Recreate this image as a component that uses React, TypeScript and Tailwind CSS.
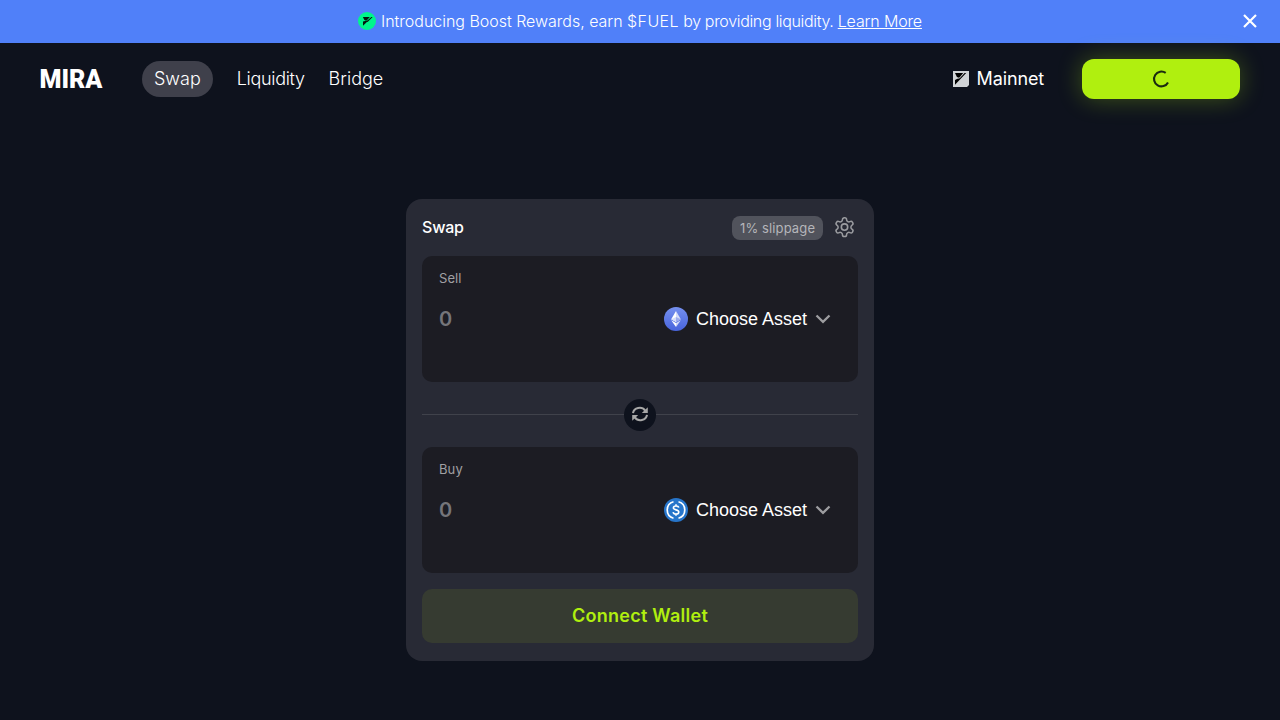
import React from "react";

function FuelMark({ className }: { className: string }) {
  return (
    <svg className={className} viewBox="0 0 18 18" fill="none">
      <circle cx="9" cy="9" r="9" fill="#00F58C" />
      <path d="M5 13.8V9.6L8 8.8H10.2Z" fill="#06140d" />
      <path d="M4.9 5H11.8L8.9 8.2Q8.4 8.7 7.6 8.4L6.4 7.9Z" fill="#06140d" />
      <path d="M8.6 9.3L13.4 5H14.6L9.6 9.9Z" fill="#06140d" />
    </svg>
  );
}

function NetworkMark() {
  return (
    <svg className="size-4" viewBox="0 0 16 16" fill="none">
      <path d="M0 0H16V14L14 16H0Z" fill="#D0D3D6" />
      <path d="M2 2H10.2L6.7 6.2Q6.1 6.9 5.3 6.6L3.9 6Z" fill="#000" />
      <path d="M2 13.8V9L4.4 7.8Q6 8 7 7L11.6 2H13.2Z" fill="#000" />
    </svg>
  );
}

function Gear() {
  return (
    <svg className="size-6" viewBox="0 0 24 24" fill="none" stroke="#9b9ca0" strokeWidth="1.6" strokeLinecap="round" strokeLinejoin="round">
      <circle cx="12.5" cy="11.1" r="3.2" />
      <path d="M12.22 2.7h-.44a2 2 0 0 0-2 2v.18a2 2 0 0 1-1 1.73l-.43.25a2 2 0 0 1-2 0l-.15-.08a2 2 0 0 0-2.73.73l-.22.38a2 2 0 0 0 .73 2.73l.15.1a2 2 0 0 1 1 1.72v.51a2 2 0 0 1-1 1.74l-.15.09a2 2 0 0 0-.73 2.73l.22.38a2 2 0 0 0 2.73.73l.15-.08a2 2 0 0 1 2 0l.43.25a2 2 0 0 1 1 1.73v.18a2 2 0 0 0 2 2h.44a2 2 0 0 0 2-2v-.18a2 2 0 0 1 1-1.73l.43-.25a2 2 0 0 1 2 0l.15.08a2 2 0 0 0 2.73-.73l.22-.39a2 2 0 0 0-.73-2.73l-.15-.08a2 2 0 0 1-1-1.74v-.5a2 2 0 0 1 1-1.74l.15-.09a2 2 0 0 0 .73-2.73l-.22-.38a2 2 0 0 0-2.73-.73l-.15.08a2 2 0 0 1-2 0l-.43-.25a2 2 0 0 1-1-1.73v-.18a2 2 0 0 0-2-2z" transform="translate(1.3 -.7) scale(.935)" />
    </svg>
  );
}

function EthIcon() {
  return (
    <svg className="size-6" viewBox="0 0 24 24">
      <defs>
        <linearGradient id="eth" x1="0" y1="0" x2="0" y2="1">
          <stop offset="0" stopColor="#7590ef" />
          <stop offset="1" stopColor="#4864dc" />
        </linearGradient>
      </defs>
      <circle cx="12" cy="12" r="12" fill="url(#eth)" />
      <path d="M12 4L7.2 12.2L12 15Z" fill="#fff" />
      <path d="M12 4L16.8 12.2L12 15Z" fill="#d5dcf8" />
      <path d="M12 10L7.2 12.2L12 15Z" fill="#d5dcf8" />
      <path d="M12 10L16.8 12.2L12 15Z" fill="#9dacee" />
      <path d="M7.2 13.3L12 20V16.1Z" fill="#fff" />
      <path d="M16.8 13.3L12 20V16.1Z" fill="#d5dcf8" />
    </svg>
  );
}

function UsdcIcon() {
  return (
    <svg className="size-6" viewBox="0 0 24 24" fill="none">
      <circle cx="12" cy="12" r="12" fill="#2775CA" />
      <path d="M9.5 3.8A8.5 8.5 0 0 0 9.5 20.2M14.5 3.8A8.5 8.5 0 0 1 14.5 20.2" stroke="#fff" strokeWidth="1.7" />
      <path d="M14.7 9.7C14.5 8.6 13.5 8 12 8C10.3 8 9.4 8.8 9.4 9.9C9.4 12.5 14.8 11.2 14.8 14C14.8 15.3 13.7 16.1 12 16.1C10.3 16.1 9.3 15.4 9.1 14.2M12 6.3V8M12 16V17.8" stroke="#fff" strokeWidth="1.6" />
    </svg>
  );
}

function AssetPanel({ label, icon }: { label: string; icon: React.ReactNode }) {
  return (
    <div className="h-[126px] rounded-[10px] bg-[#1c1c23] px-[17px] pt-3">
      <p className="text-[13px] leading-5 tracking-[0.1px] text-[#a0a0a3]">{label}</p>
      <div className="mt-[17px] flex h-7 items-center justify-between pr-2.5">
        <span className="text-xl font-semibold text-[#75757a]">0</span>
        <button className="flex items-center gap-2 font-['Liberation_Sans',sans-serif] text-lg text-white">
          {icon}
          <span>Choose Asset</span>
          <svg className="h-4 w-4" viewBox="0 0 16 16" fill="none">
            <path d="M1.5 4.5L8 10.8L14.5 4.5" stroke="#9d9da0" strokeWidth="2.3" />
          </svg>
        </button>
      </div>
    </div>
  );
}

export default function App() {
  return (
    <div className="h-[720px] w-[1280px] overflow-hidden bg-[#0e121d] font-['Inter',sans-serif] text-white">
      <div className="flex h-[43px] items-center bg-[#5080f9] pr-[22px] pl-[38px]">
        <div className="flex flex-1 items-center justify-center gap-[5px]">
          <FuelMark className="-mt-0.5 size-[18px]" />
          <p className="-mt-0.5 text-base font-light">
            <span className="tracking-[-0.02px]">Introducing Boost Rewards, earn </span>
            <span className="tracking-[0.4px]">$FUEL</span>
            <span className="tracking-[-0.33px]"> by providing liquidity. </span>
            <a className="tracking-[-0.15px] underline">Learn More</a>
          </p>
        </div>
        <svg className="-mt-px size-4" viewBox="0 0 16 16" stroke="#fff" strokeWidth="2.2">
          <path d="M2 2L14 14M14 2L2 14" />
        </svg>
      </div>

      <header className="flex h-[72px] items-center px-10">
        <svg className="h-[18px] w-[62px] overflow-visible" viewBox="0 0 62 18">
          <text x="-0.6" y="17.5" textLength="63" lengthAdjust="spacingAndGlyphs" className="fill-white font-['Roboto',sans-serif] text-[25px] font-black">MIRA</text>
        </svg>
        <nav className="ml-10 flex items-center gap-6 text-lg font-light">
          <a className="flex h-9 items-center rounded-full bg-[#3f404b] px-3">Swap</a>
          <a className="tracking-[-0.33px]">Liquidity</a>
          <a>Bridge</a>
        </nav>
        <div className="ml-auto flex items-center gap-2 text-lg tracking-[-0.14px]">
          <NetworkMark />
          <span>Mainnet</span>
        </div>
        <button className="ml-[38px] flex h-10 w-[158px] items-center justify-center rounded-[12px] bg-[#b0ef0f] shadow-[0_0_25px_rgba(176,239,15,0.3)]">
          <svg className="size-5" viewBox="0 0 20 20" fill="none">
            <path d="M14.7 3.9A7.4 7.4 0 1 0 17 13.4" stroke="#1a2a10" strokeWidth="2.1" />
          </svg>
        </button>
      </header>

      <main className="mx-auto mt-[84px] h-[462px] w-[468px] rounded-2xl bg-[#282a35] px-4 pt-4">
        <div className="flex h-[25px] items-center">
          <h1 className="-mt-0.5 text-base font-medium tracking-[-0.2px]">Swap</h1>
          <span className="ml-auto flex h-6 w-[91px] items-center rounded-lg bg-[#51535c] px-2 pt-0.5 text-[13px] tracking-[0.12px] whitespace-nowrap text-[#b5b6ba]">1% slippage</span>
          <span className="mr-0.5 ml-[9px]"><Gear /></span>
        </div>
        <div className="mt-4">
          <AssetPanel label="Sell" icon={<EthIcon />} />
        </div>
        <div className="flex h-[65px] items-center">
          <div className="h-px flex-1 bg-[#40424b]" />
          <div className="flex size-8 items-center justify-center rounded-full bg-[#0e121d]">
            <svg className="-mt-0.5 size-4" viewBox="0 0 16 16" fill="none" stroke="#a7a7a7" strokeWidth="2">
              <path d="M1 7.2A6.7 6.2 0 0 1 13.2 4.6M15 8.8A6.7 6.2 0 0 1 2.8 11.4" />
              <path d="M15.8 1.2V7H9.8ZM.2 14.8V9H6.2Z" fill="#a7a7a7" stroke="none" />
            </svg>
          </div>
          <div className="h-px flex-1 bg-[#40424b]" />
        </div>
        <AssetPanel label="Buy" icon={<UsdcIcon />} />
        <button className="mt-4 flex h-[54px] w-full items-center justify-center rounded-[10px] bg-[#363b31] text-lg font-semibold tracking-[0.27px] text-[#b0ef0f]">Connect Wallet</button>
      </main>
    </div>
  );
}
